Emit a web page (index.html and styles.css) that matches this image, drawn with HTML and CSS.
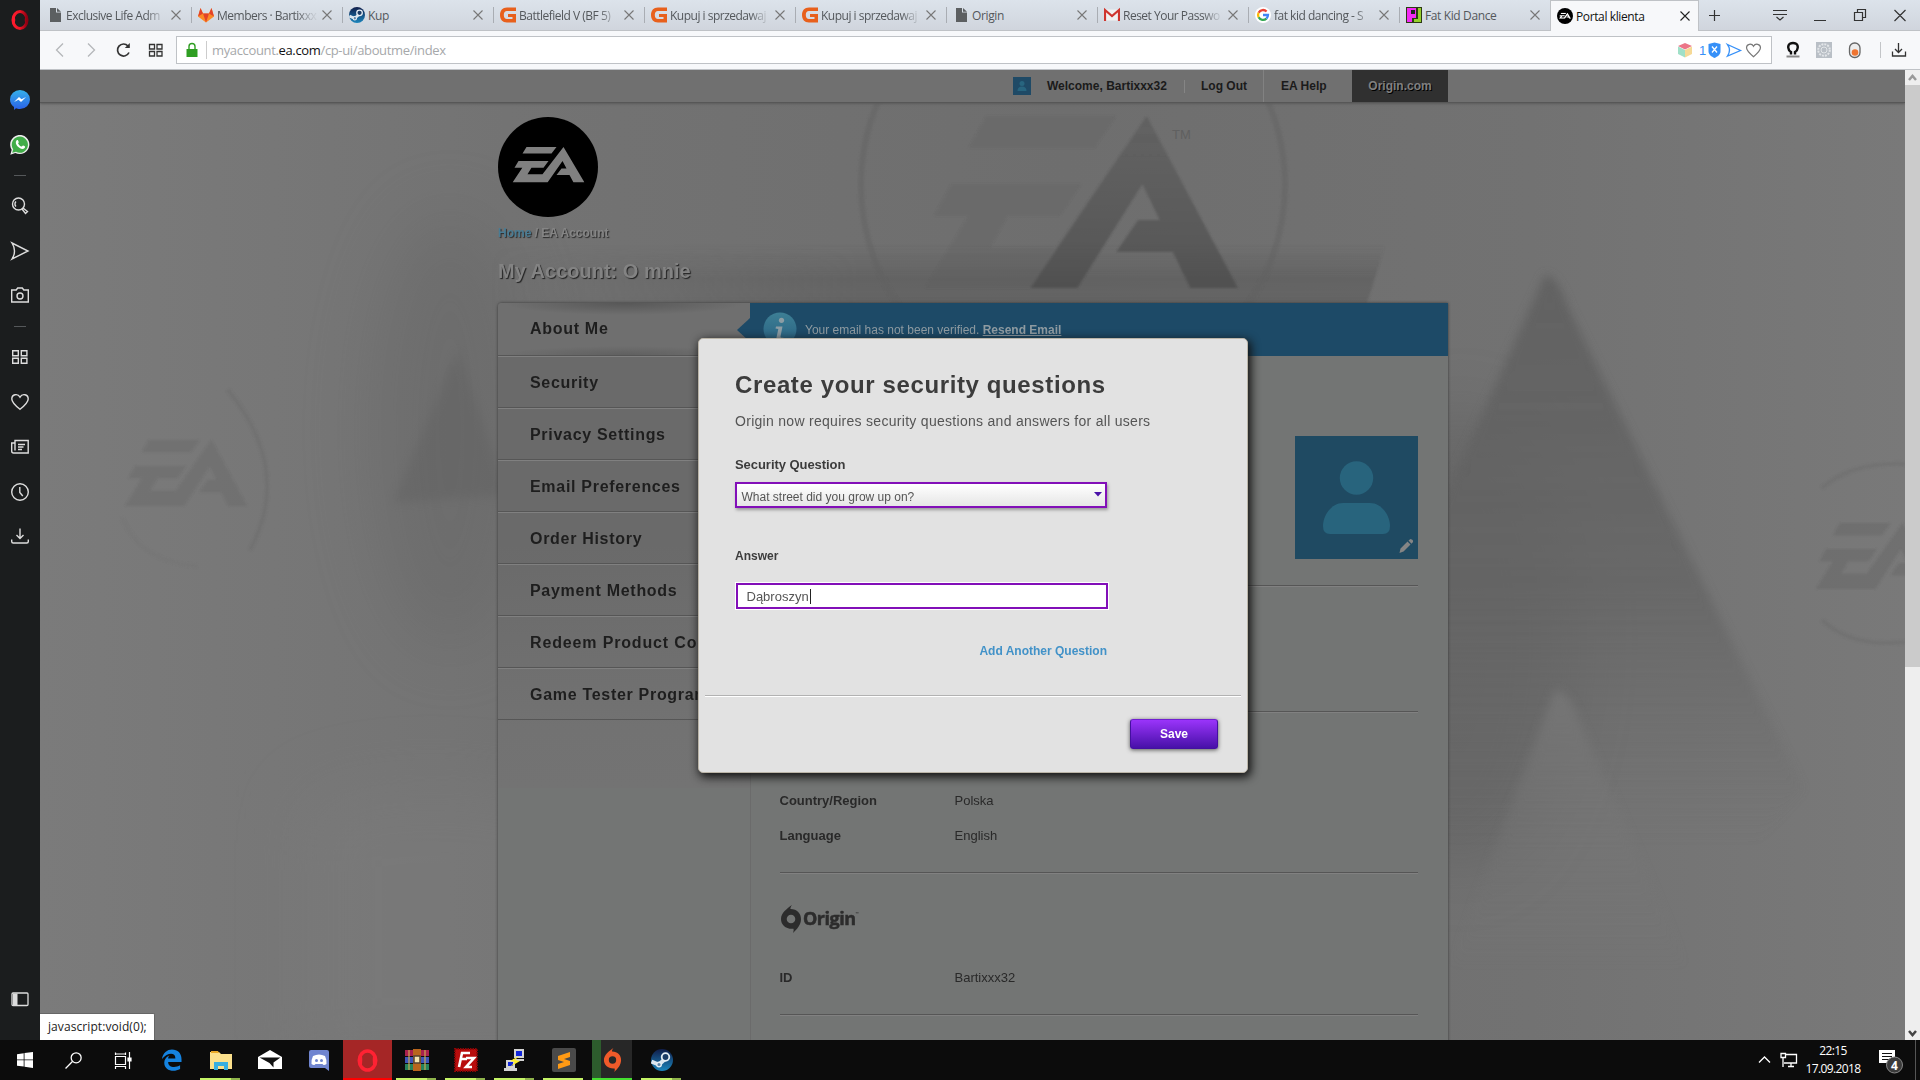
FILE: index.html
```html
<!DOCTYPE html>
<html lang="en">
<head>
<meta charset="utf-8">
<title>Portal klienta</title>
<link rel="stylesheet" href="styles.css">
</head>
<body>
<svg class="defs" width="0" height="0">
  <defs>
    <linearGradient id="op" x1="0" x2="1"><stop offset="0" stop-color="#ff1b2d"/><stop offset=".5" stop-color="#ec1527"/><stop offset="1" stop-color="#8e0012"/></linearGradient>
    <linearGradient id="ms" x1="0" x2="0" y1="0" y2="1"><stop offset="0" stop-color="#36b1ea"/><stop offset="1" stop-color="#2a5fe8"/></linearGradient>
    <linearGradient id="stm" x1="0" x2="0" y1="0" y2="1"><stop offset="0" stop-color="#101d4a"/><stop offset="1" stop-color="#1c86bd"/></linearGradient>
    <linearGradient id="info" x1="0" x2="0" y1="0" y2="1"><stop offset="0" stop-color="#3d7f95"/><stop offset="1" stop-color="#275f80"/></linearGradient>
    <symbol id="ea" viewBox="0 0 72 43" preserveAspectRatio="none"><path d="M14 0h30l-5 8H10zM6 17h30l-5 8H2zM51 0L72 43H61l-4-9H44l5-8h5l-4-9-15 26H0l11-20h9l-5 10h15z"/></symbol>
    <symbol id="file" viewBox="0 0 16 16"><path d="M3 1h6v4.500h5V15H3z M10 1l4 3.700h-4z" fill="#5c5f61"/></symbol>
    <symbol id="g2" viewBox="0 0 16 16"><path d="M16 .5H7C2.500 .5 0 3.500 0 8s2.500 7.500 7 7.500h9V7H8v3h4.500v2H7c-2 0-3.200-1.500-3.200-4S5 4 7 4h9z" fill="#e8601c"/></symbol>
    <symbol id="steam" viewBox="0 0 22 22"><circle cx="11" cy="11" r="11" fill="url(#stm)"/><path d="M.5 12.500L7.500 15.500M8 15.500l6-5.500" stroke="#dbe6ef" stroke-width="4"/><circle cx="14.500" cy="8" r="3.800" fill="#1b3c66" stroke="#e6eef4" stroke-width="1.800"/><circle cx="8" cy="15.500" r="2.300" fill="#5f85a8" stroke="#e6eef4" stroke-width="1.400"/></symbol>
    <symbol id="x" viewBox="0 0 12 12"><path d="M1.500 1.500l9 9M10.500 1.500l-9 9" stroke="currentColor" stroke-width="1.100" fill="none"/></symbol>
    <symbol id="opera" viewBox="0 0 20 20"><ellipse cx="10" cy="10" rx="7" ry="8.400" fill="none" stroke="url(#op)" stroke-width="3"/><path d="M4.500 4Q2.500 10 4.500 16 6 10 4.500 4zM15.500 4q2 6 0 12-1.500-6 0-12z" fill="url(#op)"/></symbol>
    <symbol id="heart" viewBox="0 0 20 20"><path d="M10 17.300C5 13.200 1.800 10.300 1.800 6.900c0-4.800 6-5.800 8.200-1.800 2.200-4 8.200-3 8.200 1.800 0 3.400-3.200 6.300-8.200 10.400z" fill="none" stroke="currentColor" stroke-width="1.400"/></symbol>
    <symbol id="grid4" viewBox="0 0 20 20"><path d="M2.700 3.700h5.600v5H2.700zM11.300 3.700h5.600v5h-5.600zM2.700 11.200h5.600v5H2.700zM11.300 11.200h5.600v5h-5.600z" fill="none" stroke="currentColor" stroke-width="1.400"/></symbol>
    <symbol id="dl" viewBox="0 0 20 20"><path d="M10 1.500v9.500M6.500 8L10 11.500 13.500 8M1.700 12.500v2q0 1.500 1.500 1.500h13.600q1.500 0 1.500-1.500v-2" fill="none" stroke="currentColor" stroke-width="1.400"/></symbol>
    <symbol id="origin" viewBox="0 0 20 28"><path fill-rule="evenodd" d="M11 0c-1.500 2-1.600 3.200-1.600 4.100C16 4 20 8.500 20 14c0 6-4 10-8 14 .8-2 .7-3 .5-4.200C5 24.500 0 20 0 14 0 8 6 3.500 11 0zM10 9.700a4.300 4.300 0 1 0 0 8.600 4.300 4.300 0 0 0 0-8.600z"/></symbol>
  </defs>
</svg>

<div class="window">
  <aside class="sidebar">
    <svg width="20" height="20"><use href="#opera"/></svg>
    <div class="group social">
      <svg width="20" height="20" viewBox="0 0 20 20"><path d="M10 0a10 9.500 0 0 1 0 19c-2 0-3-.3-4-.8L4 20v-3C1.500 15 0 12.500 0 9.500A10 9.500 0 0 1 10 0z" fill="url(#ms)"/><path d="M4 12l5-5 2.500 2.300L16 7l-5 5-2.500-2.300z" fill="#fff"/></svg>
      <svg width="20" height="20" viewBox="0 0 20 20"><path d="M.3 19.700l1.400-5A9.600 9.600 0 1 1 5.300 18z" fill="#eee"/><path d="M2.200 17.800l1-3.500A8.100 8.100 0 1 1 6 16.800z" fill="#41ad49"/><path d="M6.500 5.500c1-1 1.500-.5 2.200 1.400.2.800-.8 1-.6 1.600.8 1.600 2 2.600 3.400 3.100.8 0 1-1.300 1.700-1 2 .9 2.300 1 1.600 2.200-2.800 4-11.500-3.300-8.300-7.300z" fill="#fff"/></svg>
    </div>
    <i class="dash"></i>
    <div class="group">
      <svg width="20" height="20" viewBox="0 0 20 20" class="ln"><circle cx="8.500" cy="8" r="6"/><path d="M6 10.500a3.500 3.500 0 0 1 0-5M13 12l4.500 3.500-2 2L12 13"/></svg>
      <svg width="20" height="20" viewBox="0 0 20 20" class="ln"><path d="M2 2l16 8L2 18q5-8 0-16z"/></svg>
      <svg width="20" height="20" viewBox="0 0 20 20" class="ln"><path d="M1.700 4h4.500l1.500-2h4.600l1.500 2h4.500v12H1.700z"/><circle cx="10" cy="10" r="3"/></svg>
    </div>
    <i class="dash"></i>
    <div class="group">
      <svg width="20" height="20"><use href="#grid4"/></svg>
      <svg width="20" height="20"><use href="#heart"/></svg>
      <svg width="20" height="20" viewBox="0 0 20 20" class="ln"><path d="M5 3.500h13.200V16H3.500q-1.800 0-1.800-2V6H5zM5 5.500v8M8 7.500h7M8 10h5.500M8 12.500h4"/></svg>
      <svg width="20" height="20" viewBox="0 0 20 20" class="ln"><circle cx="10" cy="10" r="8.300"/><path d="M9.800 5v5.500l3 3.500"/></svg>
      <svg width="20" height="20"><use href="#dl"/></svg>
    </div>
    <svg class="panel-toggle" width="20" height="20" viewBox="0 0 20 20"><rect x="2" y="4" width="16" height="12.500" rx="1" fill="none" stroke="#ddd" stroke-width="1.300"/><path d="M3 4.500h4.500V16H3z" fill="#ddd"/></svg>
  </aside>

  <main class="main">
    <div class="tabs">
      <div class="tab long"><svg class="fav"><use href="#file"/></svg><span>Exclusive Life Adm</span><svg class="cl"><use href="#x"/></svg></div>
      <div class="tab long"><svg class="fav" viewBox="0 0 16 16"><path d="M8 15.500L0 9.500 2.500 1 5 6.500h6L13.500 1 16 9.500z" fill="#fc8a26"/><path d="M8 15.500L5 6.500h6zM0 9.500L2.500 1 5 6.500zM16 9.500L13.500 1 11 6.500z" fill="#e24329"/></svg><span>Members · Bartixxx</span><svg class="cl"><use href="#x"/></svg></div>
      <div class="tab"><svg class="fav"><use href="#steam" width="16" height="16"/></svg><span>Kup</span><svg class="cl"><use href="#x"/></svg></div>
      <div class="tab long"><svg class="fav"><use href="#g2"/></svg><span>Battlefield V (BF 5)</span><svg class="cl"><use href="#x"/></svg></div>
      <div class="tab long"><svg class="fav"><use href="#g2"/></svg><span>Kupuj i sprzedawaj</span><svg class="cl"><use href="#x"/></svg></div>
      <div class="tab long"><svg class="fav"><use href="#g2"/></svg><span>Kupuj i sprzedawaj</span><svg class="cl"><use href="#x"/></svg></div>
      <div class="tab"><svg class="fav"><use href="#file"/></svg><span>Origin</span><svg class="cl"><use href="#x"/></svg></div>
      <div class="tab long"><svg class="fav" viewBox="0 0 16 16"><path d="M1 2.500h14v11H1z" fill="#f1f1f1"/><path d="M1 14V3l7 6 7-6v11" fill="none" stroke="#cf352e" stroke-width="2.200"/></svg><span>Reset Your Passwo</span><svg class="cl"><use href="#x"/></svg></div>
      <div class="tab long"><svg class="fav" viewBox="0 0 16 16"><circle cx="8" cy="8" r="8" fill="#fff"/><g fill="none" stroke-width="2.300"><path d="M11.600 4.500A5 5 0 0 0 3.600 5.700" stroke="#ea4335"/><path d="M3.600 5.700a5 5 0 0 0 0 4.600" stroke="#fbbc05"/><path d="M3.600 10.300a5 5 0 0 0 7.800 1.300" stroke="#34a853"/><path d="M11.400 11.600A5 5 0 0 0 13 8H8" stroke="#4285f4"/></g></svg><span>fat kid dancing - S</span><svg class="cl"><use href="#x"/></svg></div>
      <div class="tab"><svg class="fav" viewBox="0 0 16 16"><path d="M0 0h16v16H0z" fill="#2c3a14"/><path d="M1 1h9v10H6v4H1z" fill="#f32bf5"/><path d="M12 1h3v14H8v-3h4z" fill="#95cf2c"/><path d="M5 3h4v4H5z" fill="#222"/></svg><span>Fat Kid Dance</span><svg class="cl"><use href="#x"/></svg></div>
      <div class="tab active"><svg class="fav" viewBox="0 0 16 16"><circle cx="8" cy="8" r="8" fill="#000"/><use href="#ea" x="2" y="4.800" width="12" height="6" fill="#fff"/></svg><span>Portal klienta</span><svg class="cl"><use href="#x"/></svg></div>
      <svg class="winctl" width="220" height="30" viewBox="1700 0 220 30"><path d="M1709 15.500h11M1714.500 10v11M1773 10.500h14M1773 14.500h14M1776.500 17l3.500 3 3.500-3M1814 20.500h12M1854.500 12.500h8v8h-8zM1857.500 12V9.500h8v8H1863M1894.500 10l11 11M1905.500 10l-11 11" fill="none" stroke="#333" stroke-width="1.200"/></svg>
    </div>

    <div class="toolbar">
      <svg class="nav" width="128" height="36" viewBox="44 32 128 36" fill="none"><path d="M63 43.500L56.500 50l6.500 6.500" stroke="#b5b7b9" stroke-width="1.300"/><path d="M88 43.500l6.500 6.500-6.500 6.500" stroke="#b5b7b9" stroke-width="1.300"/><path d="M128 46a6 6 0 1 0 1 6.500" stroke="#333" stroke-width="1.700"/><path d="M129.800 43v5h-5z" fill="#333"/><path d="M149.500 44.500h5v4.500h-5zM157 44.500h5v4.500h-5zM149.500 51.500h5V56h-5zM157 51.500h5V56h-5z" stroke="#333" stroke-width="1.300"/></svg>
      <div class="address">
        <svg width="12" height="16" viewBox="0 0 12 16"><path d="M.5 7h11v8H.5z" fill="#2f9e22"/><path d="M3 7.500V4.500a3 3 0 0 1 6 0v3" fill="none" stroke="#2f9e22" stroke-width="1.400"/></svg>
        <i></i>
        <span class="url">myaccount.<b>ea.com</b>/cp-ui/aboutme/index</span>
        <svg class="aicons" width="88" height="20" viewBox="1676 40 88 20"><path d="M1685 43l7 3-7 3.500-7-3.500z" fill="#ec7688"/><path d="M1678 46.500l7 3.500v7.500l-7-3.500z" fill="#a0e0c8"/><path d="M1692 46.500l-7 3.500v7.500l7-3.500z" fill="#f6d996"/><text x="1699" y="55" font-size="13" fill="#3690f8">1</text><path d="M1708.500 44l6-1.500 6 1.500v7c0 4-3 5.500-6 7-3-1.500-6-3-6-7z" fill="#3690f8"/><path d="M1712 46.500l5 6M1717 46.500l-5 6" stroke="#fff" stroke-width="1.300"/><path d="M1727.500 44.500l13 6-13 5.500q4-6 0-11.500z" fill="none" stroke="#3690f8" stroke-width="1.300"/><use href="#heart" x="1745" y="42" width="17" height="17" color="#777"/></svg>
      </div>
      <svg class="ext" width="136" height="28" viewBox="1780 36 136 28"><path d="M1791 54.500v-2.500c-3.500-2-3.500-7-1-8.300q3-1.300 6 0c2.500 1.300 2.500 6.300-1 8.300v2.500" fill="none" stroke="#111" stroke-width="2.400"/><path d="M1786.500 56.500h13" stroke="#888" stroke-width="2"/><path d="M1816 42h16v16h-16z" fill="#b9bfc6"/><circle cx="1824" cy="50" r="5.800" fill="none" stroke="#e3e6e9" stroke-width="2" stroke-dasharray="2 1"/><circle cx="1824" cy="50" r="3" fill="none" stroke="#e3e6e9"/><rect x="1849.500" y="43" width="10.500" height="14.500" rx="5" fill="#ededed" stroke="#666" stroke-width="1.300"/><circle cx="1855" cy="52.500" r="3.300" fill="#ef7430"/><path d="M1880.500 42v16" stroke="#c3c5c8"/><path d="M1898.500 43v9M1895 49l3.500 3.500L1902 49M1892.500 51.500v4.500h13v-4.500" fill="none" stroke="#333" stroke-width="1.300"/></svg>
    </div>

    <div class="viewport">
      <div class="page">
        <svg class="backdrop" width="1865" height="970" viewBox="40 70 1865 970" preserveAspectRatio="none">
          <defs>
            <linearGradient id="b1" x1="0" x2="1"><stop offset="0" stop-color="#7b7b7b"/><stop offset=".25" stop-color="#737373"/><stop offset=".55" stop-color="#6e6e6e"/><stop offset=".8" stop-color="#727272"/><stop offset="1" stop-color="#797979"/></linearGradient>
            <linearGradient id="b2" x1="0" x2="0" y1="0" y2="1"><stop offset="0" stop-color="#606060"/><stop offset=".5" stop-color="#646464" stop-opacity=".8"/><stop offset=".9" stop-color="#6a6a6a" stop-opacity="0"/></linearGradient>
            <linearGradient id="b3" x1="0" x2="0" y1="0" y2="1"><stop offset="0" stop-color="#555" stop-opacity="0"/><stop offset=".5" stop-color="#555" stop-opacity=".45"/><stop offset="1" stop-color="#555" stop-opacity=".4"/></linearGradient>
            <linearGradient id="b4" x1="0" x2="0" y1="0" y2="1"><stop offset="0" stop-color="#787878"/><stop offset="1" stop-color="#757575" stop-opacity="0"/></linearGradient>
            <linearGradient id="b5" x1="0" x2="0" y1="0" y2="1"><stop offset="0" stop-color="#505050" stop-opacity=".3"/><stop offset="1" stop-color="#454545" stop-opacity=".55"/></linearGradient>
            <linearGradient id="b6" x1="0" x2="1"><stop offset="0" stop-color="#fff" stop-opacity="0"/><stop offset=".4" stop-color="#fff"/><stop offset="1" stop-color="#fff"/></linearGradient>
            <mask id="fade"><path d="M490 70h920v300H490z" fill="url(#b6)"/></mask>
            <filter id="f1"><feGaussianBlur stdDeviation="1.200"/></filter>
            <filter id="f6"><feGaussianBlur stdDeviation="5"/></filter>
            <filter id="f30" x="-50%" y="-50%" width="200%" height="200%"><feGaussianBlur stdDeviation="34"/></filter>
          </defs>
          <path d="M40 70h1865v970H40z" fill="url(#b1)"/>
          <ellipse cx="450" cy="430" rx="80" ry="220" fill="#5a5a5a" opacity=".25" filter="url(#f30)"/>
          <ellipse cx="1460" cy="640" rx="110" ry="230" fill="#505050" opacity=".3" filter="url(#f30)"/>
          <path d="M300 800q150-50 330 20v260H300z" fill="#7e7e7e" opacity=".4" filter="url(#f30)"/>
          <g mask="url(#fade)"><path d="M490 245h895l-20 65H490z" fill="url(#b3)" filter="url(#f1)"/></g>
          <g filter="url(#f1)">
            <circle cx="1073" cy="185" r="212" fill="none" stroke="#5e5e5e" stroke-width="6" opacity=".38"/>
            <use href="#ea" x="925" y="116" width="313" height="172" fill="#555" opacity=".2"/>
            <path d="M1146.700 116L1238 288h-47.800l-17.400-36h-56.500l21.700-32h21.700l-17.300-36-65 104h-47z" fill="url(#b5)"/>
          </g>
          <text x="1172" y="139" font-size="13" fill="#606060">TM</text>
          <path d="M1545 275q12 0 24 34l235 480-100 120h-270V520z" fill="url(#b2)" opacity=".9" filter="url(#f6)"/>
          <path d="M1555 690q14 0 24 30l110 250h-240z" fill="url(#b4)" opacity=".8" filter="url(#f6)"/>
          <path d="M458 350l50 145-115 8z" fill="#5b5b5b" opacity=".3" filter="url(#f6)"/>
          <g filter="url(#f1)">
            <path d="M228 390q65 80 22 160" fill="none" stroke="#686868" stroke-width="4" opacity=".3"/>
            <path d="M122 518q20 45 75 48" fill="none" stroke="#707070" stroke-width="3" opacity=".3"/>
            <use href="#ea" x="125" y="440" width="122" height="66" fill="#5c5c5c" opacity=".25"/>
            <path d="M1822 488q30-26 83-24M1822 620q30 28 83 22" fill="none" stroke="#686868" stroke-width="4" opacity=".3"/>
            <use href="#ea" x="1816" y="523" width="122" height="66" fill="#5c5c5c" opacity=".28"/>
          </g>
        </svg>

        <header class="eabar">
          <span class="mini"><svg width="18" height="18" viewBox="0 0 18 18"><path d="M0 0h18v18H0z" fill="#1f4a66"/><circle cx="9" cy="6.500" r="2.500" fill="#28657f"/><path d="M4.500 14q0-4.500 4.500-4.500t4.500 4.500z" fill="#28657f"/></svg>Welcome, Bartixxx32</span>
          <span class="logout">Log Out</span>
          <span class="help">EA Help</span>
          <span class="odc">Origin.com</span>
        </header>

        <div class="wrap">
          <svg class="logo" width="100" height="100" viewBox="0 0 100 100"><circle cx="50" cy="50" r="50" fill="#000"/><use href="#ea" x="14.500" y="30" width="72" height="35.500" fill="#808080"/></svg>
          <div class="crumb"><a>Home</a> / EA Account</div>
          <h1>My Account: O mnie</h1>
          <div class="card">
            <nav class="menu">
              <a class="current">About Me</a><a>Security</a><a>Privacy Settings</a><a>Email Preferences</a><a>Order History</a><a>Payment Methods</a><a class="wide">Redeem Product Code</a><a>Game Tester Programs</a>
            </nav>
            <section class="content">
              <div class="banner"><svg class="tip" width="13" height="26"><path d="M13 1v24L0 13z" fill="#1d4a67"/></svg>
                <svg width="34" height="34" viewBox="0 0 34 34"><circle cx="17" cy="17" r="16.500" fill="url(#info)"/><circle cx="18.500" cy="8.300" r="2.600" fill="#8d9da4"/><path d="M13 14.500h6.500l-2 10q0 2 3 1-2 3.500-5 3-2.500-.5-2-3l1.800-8.500-2.800-.5z" fill="#8d9da4"/></svg>
                <span>Your email has not been verified. <b>Resend Email</b></span></div>
              <div class="portrait"><svg width="123" height="123" viewBox="0 0 123 123"><path d="M0 0h123v123H0z" fill="#1f4a62"/><circle cx="61.500" cy="42" r="16.700" fill="#28647d"/><path d="M28 90c0-10 8-23 20-23h27c12 0 20 13 20 23q0 8-7 8H35q-7 0-7-8z" fill="#28647d"/><path d="M104.500 117l1-4.500 7-7 3 3-7 7zM113.500 104.500l2-1.500q3 .5 2.500 3l-1.500 1.700z" fill="#858585"/></svg></div>
              <div class="block b1"></div>
              <div class="block b2"></div>
              <div class="block b3"><dl><dt>Country/Region</dt><dd>Polska</dd><dt>Language</dt><dd>English</dd></dl></div>
              <div class="block b4">
                <div class="ologo"><svg width="20" height="28"><use href="#origin" fill="#2c2c2c"/></svg><span>Origin</span><small>™</small></div>
                <dl><dt>ID</dt><dd>Bartixxx32</dd></dl></div>
            </section>
          </div>
        </div>

        <div class="modal">
          <div class="form">
            <h2>Create your security questions</h2>
            <p>Origin now requires security questions and answers for all users</p>
            <label class="l1">Security Question</label>
            <div class="select"><span>What street did you grow up on?</span><svg width="8" height="5"><path d="M0 0h8L4 4.500z" fill="#4a12a8"/></svg></div>
            <label class="l2">Answer</label>
            <div class="input">Dąbroszyn<i></i></div>
            <a class="add">Add Another Question</a>
          </div>
          <div class="foot"><button>Save</button></div>
        </div>
        <div class="status">javascript:void(0);</div>
      </div>
      <div class="scroll"><div class="arr"><svg width="15" height="15"><path d="M4 10l3.500-4L11 10" fill="none" stroke="#999" stroke-width="2.500"/></svg></div><div class="thumb"></div><div class="arr"><svg width="15" height="15"><path d="M4 6l3.500 4L11 6" fill="none" stroke="#444" stroke-width="2.500"/></svg></div></div>
    </div>
  </main>
</div>

<footer class="taskbar">
  <span class="t"><svg viewBox="0 0 16 16" width="16" height="16" fill="#fff"><path d="M0 2.200L6.700 1.200v6.300H0zM7.500 1.100L16 0v7.500H7.500zM0 8.300h6.700v6.300L0 13.700zM7.500 8.300H16V16l-8.500-1.200z"/></svg></span>
  <span class="t"><svg viewBox="0 0 16 16" width="17" height="17" fill="none" stroke="#fff" stroke-width="1.200"><circle cx="10.500" cy="5.500" r="4.700"/><path d="M7 9L.5 15.500"/></svg></span>
  <span class="t"><svg viewBox="0 0 18 17" width="18" height="17" fill="none" stroke="#fff" stroke-width="1.200"><path d="M1.500 4.500h10v8h-10zM1.500 3V.5M11.500 3V.5M1.500 2h10M1.500 17v-2.500h10V17M15.500 0v17"/><path d="M14 6h3v3h-3z" fill="#fff"/></svg></span>
  <span class="t"><svg viewBox="0 0 22 22" width="21" height="22"><path d="M1 10C2 3.500 6.500 0 11.500 0 17.500 0 21.500 4 21.500 10v3H7.500c0 6 7.500 6.500 12.500 3.500v4C12 25 2.500 21 3.500 13 4 9 7 7 9 6 8 7 7.600 8 7.500 9.300H15C15.500 3 7 2.500 1 10z" fill="#1583e0"/></svg></span>
  <span class="t run two"><svg viewBox="0 0 22 20" width="22" height="20"><path d="M0 2h9l2 2h11v15H0z" fill="#fbe08c"/><path d="M1 1h7l1 2H1z" fill="#e9a927"/><path d="M4 12h14v8h-4v-4H8v4H4z" fill="#38aee0"/></svg></span>
  <span class="t"><svg viewBox="0 0 24 20" width="24" height="20"><path d="M0 7l12-7 12 7v12H0z" fill="#fff"/><path d="M1.500 7.500h21l-7 5v5l-4-4.500z" fill="#111"/></svg></span>
  <span class="t"><svg viewBox="0 0 20 21" width="20" height="21"><path d="M2 0h16q2 0 2 2v19l-4-3H2q-2 0-2-2V2q0-2 2-2z" fill="#7085d0"/><path d="M4 6q6-3 12 0 2 4 1.500 8-3 2-4 0h-7q-1 2-4 0Q2 10 4 6z" fill="#fff"/><circle cx="7.500" cy="10.500" r="1.500" fill="#7085d0"/><circle cx="12.500" cy="10.500" r="1.500" fill="#7085d0"/></svg></span>
  <span class="t opera"><svg width="23" height="23" viewBox="0 0 20 20"><ellipse cx="10" cy="10" rx="7.200" ry="8.300" fill="none" stroke="#ff2233" stroke-width="3"/><path d="M4.500 3.500Q2.500 10 4.500 16.500 6.500 10 4.500 3.500zM15.500 3.500q2 6.500 0 13-2-6.500 0-13z" fill="#ff2233"/></svg></span>
  <span class="t run two"><svg viewBox="0 0 24 22" width="24" height="22"><path d="M0 1h24v6H0z" fill="#a8214e"/><path d="M0 8h24v6H0z" fill="#3d55b8"/><path d="M0 15h24v6H0z" fill="#26835b"/><path d="M8 0h8v22H8z" fill="#b9661d"/><path d="M9 7h6v7H9z" fill="#f4e5ae" stroke="#543" stroke-width="1.500"/><path d="M4 1v20M20 1v20" stroke="#c8a850" stroke-width="1.200"/></svg></span>
  <span class="t run two"><svg viewBox="0 0 24 24" width="24" height="24"><path d="M1 1h22v22H1z" fill="#b80d0d" stroke="#8d0505" stroke-width="2" stroke-dasharray="1.500 1"/><path d="M5 19L8 5h8M7 11h6M12 10h8l-8 9h6" fill="none" stroke="#fff" stroke-width="2.600"/></svg></span>
  <span class="t run two"><svg viewBox="0 0 22 22" width="22" height="22"><path d="M10 0h10v9H10zM9 10h11v2H9zM2 11h9v8H2zM0 19h13v3H0z" fill="#d3d3d3"/><path d="M12 2h6v5h-6zM4 13h5v4H4z" fill="#1126da"/><path d="M15 7l-9 5 5 1-5 5 10-6-5-1z" fill="#ffee28"/></svg></span>
  <span class="t run"><svg viewBox="0 0 24 24" width="24" height="24"><rect width="24" height="24" rx="2" fill="#4a4a4a"/><path d="M6 8l12-4v5l-6 2 6 2v4L6 21v-5l6-2-6-2z" fill="#ff9a14"/></svg></span>
  <span class="t orig"><svg width="19" height="24"><use href="#origin" fill="#f05a2a"/></svg></span>
  <span class="t run two"><svg width="22" height="22"><use href="#steam"/></svg></span>
  <div class="tray">
    <svg width="42" height="18" viewBox="0 0 42 18" fill="none" stroke="#fff" stroke-width="1.300"><path d="M1 11.500L6.500 6l5.500 5.500M28 3.500h10.500v8.500H26M23 2.500h4.500v4H23zM25 7v9M30 15.500h6M33 12v3"/></svg>
    <div class="clock"><div>22:15</div><div>17.09.2018</div></div>
    <svg class="note" width="28" height="28" viewBox="0 0 28 28"><path d="M1 4h16v13h-5l-2 3v-3H1z" fill="#fff"/><path d="M4 7.500h10M4 10.500h10M4 13.500h7" stroke="#111"/><circle cx="16.500" cy="19" r="8" fill="#3b3b3b" stroke="#888"/><text x="13" y="23.500" font-size="12" font-weight="bold" fill="#fff">4</text></svg>
    <i class="peek"></i>
  </div>
</footer>
</body>
</html>
```

FILE: styles.css
```css
* { box-sizing: border-box; }
body { margin: 0; width: 1920px; height: 1080px; overflow: hidden; display: flex; flex-direction: column; font-family: "Liberation Sans", Arial, sans-serif; font-size: 12px; }
svg { display: block; flex: none; }
.defs { position: absolute; }
.window { display: flex; height: 1040px; }

.sidebar { width: 40px; background: #1b1d1e; display: flex; flex-direction: column; align-items: center; padding: 10px 1px 31px 0; color: #ddd; }
.sidebar .group { display: flex; flex-direction: column; gap: 25px; }
.sidebar .social { margin-top: 60px; }
.dash { width: 12px; height: 1px; margin: 20px 0; background: #55585a; flex: none; }
.ln { fill: none; stroke: #ddd; stroke-width: 1.4; }
.panel-toggle { margin-top: auto; }

.main { width: 1880px; display: flex; flex-direction: column; }
.tabs { height: 31px; display: flex; background: linear-gradient(#dce3eb, #d0d5dd); border-bottom: 1px solid #bfc2c6; font-family: "Open Sans", "Noto Sans", sans-serif; font-size: 12px; letter-spacing: -.38px; color: #54585c; }
.tab { width: 151px; height: 30px; display: flex; align-items: center; padding: 0 9px 0 7px; position: relative; }
.tab + .tab::before { content: ""; position: absolute; left: 0; top: 7px; width: 1px; height: 16px; background: #a9adb3; }
.tab .fav { width: 16px; height: 16px; }
.tab span { width: 100px; margin: 0 4px 0 3px; white-space: nowrap; }
.tab.long span { letter-spacing: -.5px; -webkit-mask-image: linear-gradient(90deg, #000 80%, rgba(0,0,0,.12) 97%); mask-image: linear-gradient(90deg, #000 80%, rgba(0,0,0,.12) 97%); }
.tab .cl { width: 12px; height: 12px; color: #777; }
.tab.active { width: 149px; height: 31px; background: #f7f8fa; border: 1px solid #bfc2c6; border-bottom: 0; padding: 0 7px 0 6px; color: #111; }
.tab.active::before { display: none; }
.tab.active .cl { color: #222; }
.winctl { margin-left: auto; }

.toolbar { height: 39px; background: #f7f8fa; border-bottom: 1px solid #bfc2c6; display: flex; align-items: center; padding: 0 4px; }
.address { width: 1596px; height: 28px; margin-left: 4px; background: #fff; border: 1px solid #bfc2c6; display: flex; align-items: center; padding: 0 7px 0 9px; }
.address i { width: 1px; height: 18px; background: #ccc; margin: 0 5px 0 8px; }
.url { font-family: "Open Sans", "Noto Sans", sans-serif; font-size: 13px; letter-spacing: -.35px; color: #a6a8aa; }
.url b { font-weight: 400; color: #111; }
.aicons { margin-left: auto; }
.ext { margin-left: auto; }

.viewport { height: 970px; display: flex; }
.page { width: 1865px; height: 970px; position: relative; overflow: hidden; }
.backdrop { position: absolute; inset: 0; }
.eabar { position: relative; height: 33px; background: #707070; border-bottom: 1px solid #575757; box-shadow: 0 1px 2px #5c5c5c; padding-right: 457px; display: flex; justify-content: flex-end; font-weight: 700; color: #1b1b1b; line-height: 32px; }
.eabar span { height: 32px; }
.mini { display: flex; align-items: center; gap: 16px; width: 171px; }
.logout { width: 80px; padding-left: 17px; border-right: 1px solid #828282; background: linear-gradient(#858585, #858585) 0 10px / 1px 13px no-repeat; }
.help { width: 88px; padding-left: 17px; }
.odc { width: 96px; background: #303030; color: #808080; text-align: center; text-shadow: 1px 1px 0 #000; }

.wrap { position: relative; width: 950px; margin: 14px 0 0 458px; }
.crumb { margin-top: 9px; line-height: 14px; color: #858585; font-weight: 700; text-shadow: 1px 1px 1px #2a2a2a; }
.crumb a { color: #4a7c94; }
h1 { margin: 20px 0 20px; font-size: 20px; line-height: 23px; color: #838383; text-shadow: 1px 1px 1px #222; }
.card { display: flex; height: 770px; background: #737574; border-radius: 4px 0 0 0; box-shadow: 0 0 3px #333; }
.menu { width: 252px; height: 485px; background: linear-gradient(#6a6a6a 50%, #727272 88%, #737373); border-radius: 4px 0 0 0; font-size: 16px; font-weight: 700; letter-spacing: .7px; color: #1e1e1e; overflow: hidden; }
.menu a { display: block; height: 52px; line-height: 52px; padding-left: 32px; white-space: nowrap; border-top: 1px solid #808080; border-bottom: 1px solid #565656; }
.menu .current { height: 53px; border-top: 0; line-height: 51px; background: radial-gradient(120px 12px at 50% 0, #575757, transparent), radial-gradient(120px 9px at 50% 100%, #606060, transparent), #6f6f6f; }
.menu .wide { letter-spacing: .85px; }
.content { width: 698px; position: relative; padding: 0 30px; border-left: 1px solid #6b6b6b; }
.banner { height: 53px; margin: 0 -30px 0 -31px; background: #1d4a67; display: flex; align-items: center; gap: 8px; padding-left: 13px; padding-bottom: 2px; color: #8f9ba1; position: relative; }
.banner span { padding-top: 2px; }
.tip { position: absolute; left: -13px; top: 14px; }
.banner b { text-decoration: underline; }
.portrait { height: 123px; margin-top: 80px; display: flex; justify-content: flex-end; }
.block { border-bottom: 1px solid #565656; box-shadow: 0 1px #818181; margin-left: -1px; }
.b1 { height: 27px; }
.b2 { height: 126px; }
.b3 { height: 161px; padding-top: 81px; }
.b4 { height: 142px; padding-top: 32px; }
dl { margin: 0 0 0 -.5px; display: grid; grid-template-columns: 175px 1fr; row-gap: 19px; font-size: 13px; line-height: 16px; color: #292929; }
dt { font-weight: 700; }
dd { margin: 0; }
.ologo { display: flex; align-items: center; height: 28px; padding-left: 1px; color: #2c2c2c; gap: 2px; font: 700 18px/26px "Open Sans", sans-serif; letter-spacing: -.5px; }
.ologo span { -webkit-text-stroke: .5px #2c2c2c; padding-bottom: 2px; }
.ologo small { font-size: 4px; align-self: flex-start; line-height: 18px; margin-left: -2px; }
.b4 dl { margin-top: 37px; }

.modal { position: absolute; left: 658px; top: 268px; width: 550px; height: 435px; background: #e2e2e2; border: 1px solid #bbb5a8; border-radius: 5px; box-shadow: 2px 3px 10px 1px #111; color: #3c3c3c; padding: 0 6px; display: flex; flex-direction: column; }
.form { height: 357px; border-bottom: 1px solid #b2b2b2; padding: 31px 0 0 30px; }
h2 { margin: 0; font-size: 24px; line-height: 30px; letter-spacing: .62px; }
.form p { margin: 12px 0 0; font-size: 14px; line-height: 18px; letter-spacing: .29px; color: #555; }
label { display: block; font-weight: 700; line-height: 16px; }
.l1 { margin: 27px 0 0; font-size: 13px; letter-spacing: -.05px; }
.select { width: 372px; height: 26px; margin: 9px 0 0; border: 2px solid #820fb8; background: linear-gradient(#fff, #e6e6e6); box-shadow: 1px 2px 3px #999; display: flex; align-items: center; justify-content: space-between; padding: 3px 3px 0 4.500px; color: #555; }
.select svg { margin-bottom: 5px; }
.l2 { margin: 40px 0 0; }
.input { width: 372px; height: 26px; margin: 19px 0 0 1px; border: 2px solid #820fb8; background: #fff; box-shadow: 0 0 0 1px #fff; display: flex; align-items: center; padding-left: 8.500px; font-size: 13px; color: #555; }
.input i { width: 1px; height: 15px; background: #222; margin-left: 1px; }
.add { display: block; width: 372px; margin-top: 34px; line-height: 16px; text-align: right; font-weight: 700; color: #4292c8; }
.foot { border-top: 1px solid #fff; display: flex; justify-content: flex-end; padding: 22px 23px 0 0; }
button { width: 88px; height: 30px; border: 1px solid #4410a0; border-top-color: #7020d0; border-radius: 3px; background: linear-gradient(#9a34fa, #4710a8); color: #fff; font: 700 12px "Liberation Sans", Arial, sans-serif; box-shadow: 0 1px 4px #555; padding: 0 0 1px; }
.status { position: absolute; left: 0; bottom: 0; width: 115px; height: 27px; padding-left: 8px; background: #fff; border: solid #666; border-width: 1px 1px 0 0; border-radius: 0 2px 0 0; font: 12px/26px "Open Sans", "Noto Sans", sans-serif; letter-spacing: .08px; color: #222; white-space: nowrap; }
.scroll { width: 15px; background: #eee; display: flex; flex-direction: column; }
.thumb { height: 582px; background: #cbcbcb; margin-bottom: auto; }

.taskbar { height: 40px; background: #0c0c0c; display: flex; color: #fff; font-family: "Open Sans", "Noto Sans", sans-serif; }
.t { width: 49px; flex: none; height: 40px; display: flex; align-items: center; justify-content: center; position: relative; }
.run::after { content: ""; position: absolute; left: 4px; bottom: 0; width: 40px; height: 2px; background: #c5f466; }
.two::after { background: linear-gradient(90deg, #c5f466 31px, #8fb44b 31px); }
.opera { background: linear-gradient(#a52626 38px, #f00 38px); }
.orig { background: linear-gradient(transparent 38px, #45e030 38px) 4px 0 / 40px 40px no-repeat, linear-gradient(90deg, #2d5c2d 9px, #272727 9px) 4px 0 / 40px 40px no-repeat; }
.tray { margin-left: auto; display: flex; align-items: center; }
.clock { width: 68px; text-align: center; line-height: 18px; font-size: 12px; letter-spacing: -.6px; margin-left: -1px; }
.note { margin: 0 9px 0 11px; }
.peek { width: 1px; height: 40px; background: #555; margin-right: 4px; }
```
